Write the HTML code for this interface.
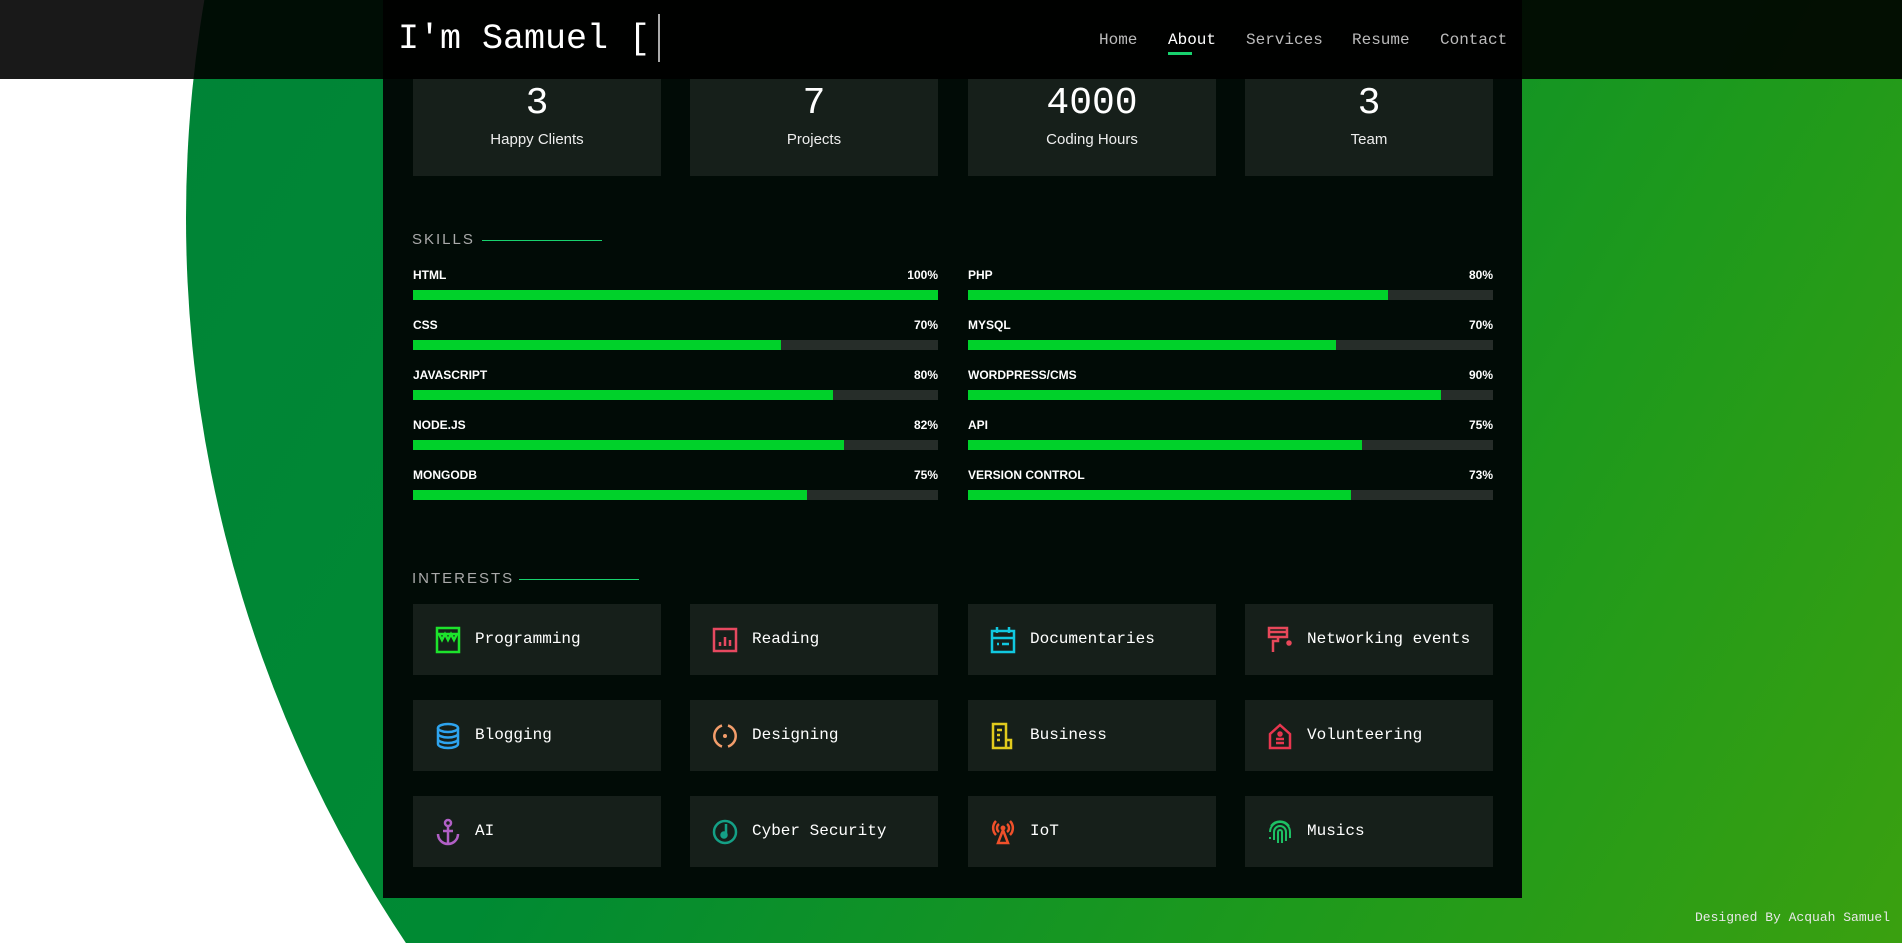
<!DOCTYPE html>
<html style="width:1902px;height:943px;overflow:hidden"><head><meta charset="utf-8"><style>
*{margin:0;padding:0;box-sizing:border-box}
body{width:1902px;height:943px;overflow:hidden;background:#fff;font-family:"Liberation Sans",sans-serif}
.wrap{position:relative;width:1902px;height:943px;overflow:hidden}
.circle{position:absolute;left:186px;top:-1087px;width:2610px;height:2610px;border-radius:50%;background:linear-gradient(120deg,#007f3a 0%,#008a33 35%,#1e9a1c 55%,#3aa010 70%)}
.header{position:absolute;left:0;top:0;width:1902px;height:79px;background:rgba(0,0,0,.9);z-index:5}
.panel{position:absolute;left:383px;top:0;width:1139px;height:898px;background:#010b06}
.title{position:absolute;left:398px;top:19px;font-family:"Liberation Mono",monospace;font-size:35px;color:#fff;z-index:6}
.cursor{position:absolute;left:658px;top:14px;width:2px;height:48px;background:#aaa;z-index:6}
.nav{position:absolute;top:31px;font-family:"Liberation Mono",monospace;font-size:16px;color:#bbb;z-index:6}
.nav.a{color:#fff}
.ul{position:absolute;left:1168px;top:52px;width:24px;height:3px;background:#18d26e;z-index:6}
.stat{position:absolute;top:79px;width:248px;height:97px;background:#161f1a;text-align:center;color:#fff}
.stat .n{position:absolute;top:3px;left:0;right:0;font-family:"Liberation Mono",monospace;font-size:38px}
.stat .l{position:absolute;top:52px;left:0;right:0;font-size:15px;color:#eee}
.sec{position:absolute;left:412px;font-size:15px;letter-spacing:2px;color:#aaa}
.line{position:absolute;height:1px;background:#18d26e}
.sk{position:absolute;width:525px;height:40px;color:#fff;font-size:12px;font-weight:bold}
.sk .p{position:absolute;right:0;top:0}
.sk .b{position:absolute;left:0;top:22px;width:525px;height:10px;background:#262d29}
.sk .f{height:10px;background:#00d12a}
.int{position:absolute;width:248px;height:71px;background:#161f1a;color:#fff;font-family:"Liberation Mono",monospace;font-size:16px}
.int svg{position:absolute;left:22px;top:22px}
.int span{position:absolute;left:62px;top:26px}
.foot{position:absolute;left:1695px;top:910px;font-family:"Liberation Mono",monospace;font-size:13px;color:#e8e8e8}
</style></head><body><div class="wrap">
<div class="circle"></div>
<div class="panel"></div>
<div class="header"></div>
<div class="title">I'm Samuel [</div><div class="cursor"></div>
<div class="nav" style="left:1099px">Home</div>
<div class="nav a" style="left:1168px">About</div>
<div class="nav" style="left:1246px">Services</div>
<div class="nav" style="left:1352px">Resume</div>
<div class="nav" style="left:1440px">Contact</div>
<div class="ul"></div>

<div class="stat" style="left:413px"><div class="n">3</div><div class="l">Happy Clients</div></div>
<div class="stat" style="left:690px"><div class="n">7</div><div class="l">Projects</div></div>
<div class="stat" style="left:968px"><div class="n">4000</div><div class="l">Coding Hours</div></div>
<div class="stat" style="left:1245px"><div class="n">3</div><div class="l">Team</div></div>

<div class="sec" style="top:231px">SKILLS</div><div class="line" style="left:482px;top:240px;width:120px"></div>

<div class="sk" style="left:413px;top:268px">HTML<span class="p">100%</span><div class="b"><div class="f" style="width:100%"></div></div></div>
<div class="sk" style="left:413px;top:318px">CSS<span class="p">70%</span><div class="b"><div class="f" style="width:70%"></div></div></div>
<div class="sk" style="left:413px;top:368px">JAVASCRIPT<span class="p">80%</span><div class="b"><div class="f" style="width:80%"></div></div></div>
<div class="sk" style="left:413px;top:418px">NODE.JS<span class="p">82%</span><div class="b"><div class="f" style="width:82%"></div></div></div>
<div class="sk" style="left:413px;top:468px">MONGODB<span class="p">75%</span><div class="b"><div class="f" style="width:75%"></div></div></div>
<div class="sk" style="left:968px;top:268px">PHP<span class="p">80%</span><div class="b"><div class="f" style="width:80%"></div></div></div>
<div class="sk" style="left:968px;top:318px">MYSQL<span class="p">70%</span><div class="b"><div class="f" style="width:70%"></div></div></div>
<div class="sk" style="left:968px;top:368px">WORDPRESS/CMS<span class="p">90%</span><div class="b"><div class="f" style="width:90%"></div></div></div>
<div class="sk" style="left:968px;top:418px">API<span class="p">75%</span><div class="b"><div class="f" style="width:75%"></div></div></div>
<div class="sk" style="left:968px;top:468px">VERSION CONTROL<span class="p">73%</span><div class="b"><div class="f" style="width:73%"></div></div></div>

<div class="sec" style="top:570px">INTERESTS</div><div class="line" style="left:519px;top:579px;width:120px"></div>

<div class="int" style="left:413px;top:604px"><svg width="26" height="28" viewBox="0 0 26 28" fill="none" stroke="#1de32c" stroke-width="2.5"><rect x="2" y="2" width="22" height="24"/><path d="M2 8h22M4 8l3 6 3-6 3 6 3-6 3 6 3-6"/></svg><span>Programming</span></div>
<div class="int" style="left:690px;top:604px"><svg width="26" height="28" viewBox="0 0 26 28" fill="none" stroke="#e64960" stroke-width="2.5"><rect x="2" y="3" width="22" height="22"/><path d="M8 20v-4M13 20v-9M18 20v-6"/></svg><span>Reading</span></div>
<div class="int" style="left:968px;top:604px"><svg width="26" height="28" viewBox="0 0 26 28" fill="none" stroke="#11c8e0" stroke-width="2.5"><rect x="2" y="5" width="22" height="21"/><path d="M7 1v6M19 1v6M2 12h22M7 18h2M12 18h7"/></svg><span>Documentaries</span></div>
<div class="int" style="left:1245px;top:604px"><svg width="26" height="28" viewBox="0 0 26 28" fill="none" stroke="#e8485a" stroke-width="2.5"><rect x="2" y="2" width="18" height="9"/><path d="M2 6h18M11 11v4H6v11"/><circle cx="22" cy="17" r="1.5" fill="#e8485a"/></svg><span>Networking events</span></div>

<div class="int" style="left:413px;top:700px"><svg width="26" height="28" viewBox="0 0 26 28" fill="none" stroke="#2ea4ef" stroke-width="2.5"><ellipse cx="13" cy="6" rx="10" ry="4"/><path d="M3 6v16c0 2.2 4.5 4 10 4s10-1.8 10-4V6M3 11.5c0 2.2 4.5 4 10 4s10-1.8 10-4M3 17c0 2.2 4.5 4 10 4s10-1.8 10-4"/></svg><span>Blogging</span></div>
<div class="int" style="left:690px;top:700px"><svg width="26" height="28" viewBox="0 0 26 28" fill="none" stroke="#f29d6b" stroke-width="2.5"><path d="M10 3.5A11 11 0 0 0 10 24.5M16 3.5A11 11 0 0 1 16 24.5"/><circle cx="13" cy="14" r="2" fill="#f29d6b" stroke="none"/></svg><span>Designing</span></div>
<div class="int" style="left:968px;top:700px"><svg width="26" height="28" viewBox="0 0 26 28" fill="none" stroke="#e2cb1d" stroke-width="2.5"><path d="M3 2h13v24H3zM16 18h5v8h-5M7 8h5M7 13h3M7 18h3"/></svg><span>Business</span></div>
<div class="int" style="left:1245px;top:700px"><svg width="26" height="28" viewBox="0 0 26 28" fill="none" stroke="#e8364f" stroke-width="2.5"><path d="M3 12L13 3l10 9v14H3z"/><circle cx="13" cy="12" r="1.5"/><path d="M9 17h8M9 21h8"/></svg><span>Volunteering</span></div>

<div class="int" style="left:413px;top:796px"><svg width="26" height="28" viewBox="0 0 26 28" fill="none" stroke="#b160c6" stroke-width="2.5"><circle cx="13" cy="5" r="3"/><path d="M13 8v17M8 13h10M3 16a10 10 0 0 0 20 0"/></svg><span>AI</span></div>
<div class="int" style="left:690px;top:796px"><svg width="26" height="28" viewBox="0 0 26 28" fill="none" stroke="#14a086" stroke-width="2.5"><circle cx="13" cy="14" r="11"/><path d="M14 6v10"/><circle cx="12" cy="17" r="2.5" fill="#14a086"/></svg><span>Cyber Security</span></div>
<div class="int" style="left:968px;top:796px"><svg width="26" height="28" viewBox="0 0 26 28" fill="none" stroke="#f0502a" stroke-width="2.5"><path d="M6 3a10 10 0 0 0 0 14M20 3a10 10 0 0 1 0 14M9 6a5 5 0 0 0 0 8M17 6a5 5 0 0 1 0 8M13 12l-5 13h10z"/><circle cx="13" cy="10" r="1.2" fill="#f0502a"/></svg><span>IoT</span></div>
<div class="int" style="left:1245px;top:796px"><svg width="26" height="28" viewBox="0 0 26 28" fill="none" stroke="#1dc064" stroke-width="2"><path d="M4 8a11 11 0 0 1 18 0M3 14a10 10 0 0 1 20 0v6M7 22v-8a6 6 0 0 1 12 0v9M11 25V14a2 2 0 0 1 4 0v11M3 19v2"/></svg><span>Musics</span></div>

<div class="foot">Designed By Acquah Samuel</div>
</div></body></html>
